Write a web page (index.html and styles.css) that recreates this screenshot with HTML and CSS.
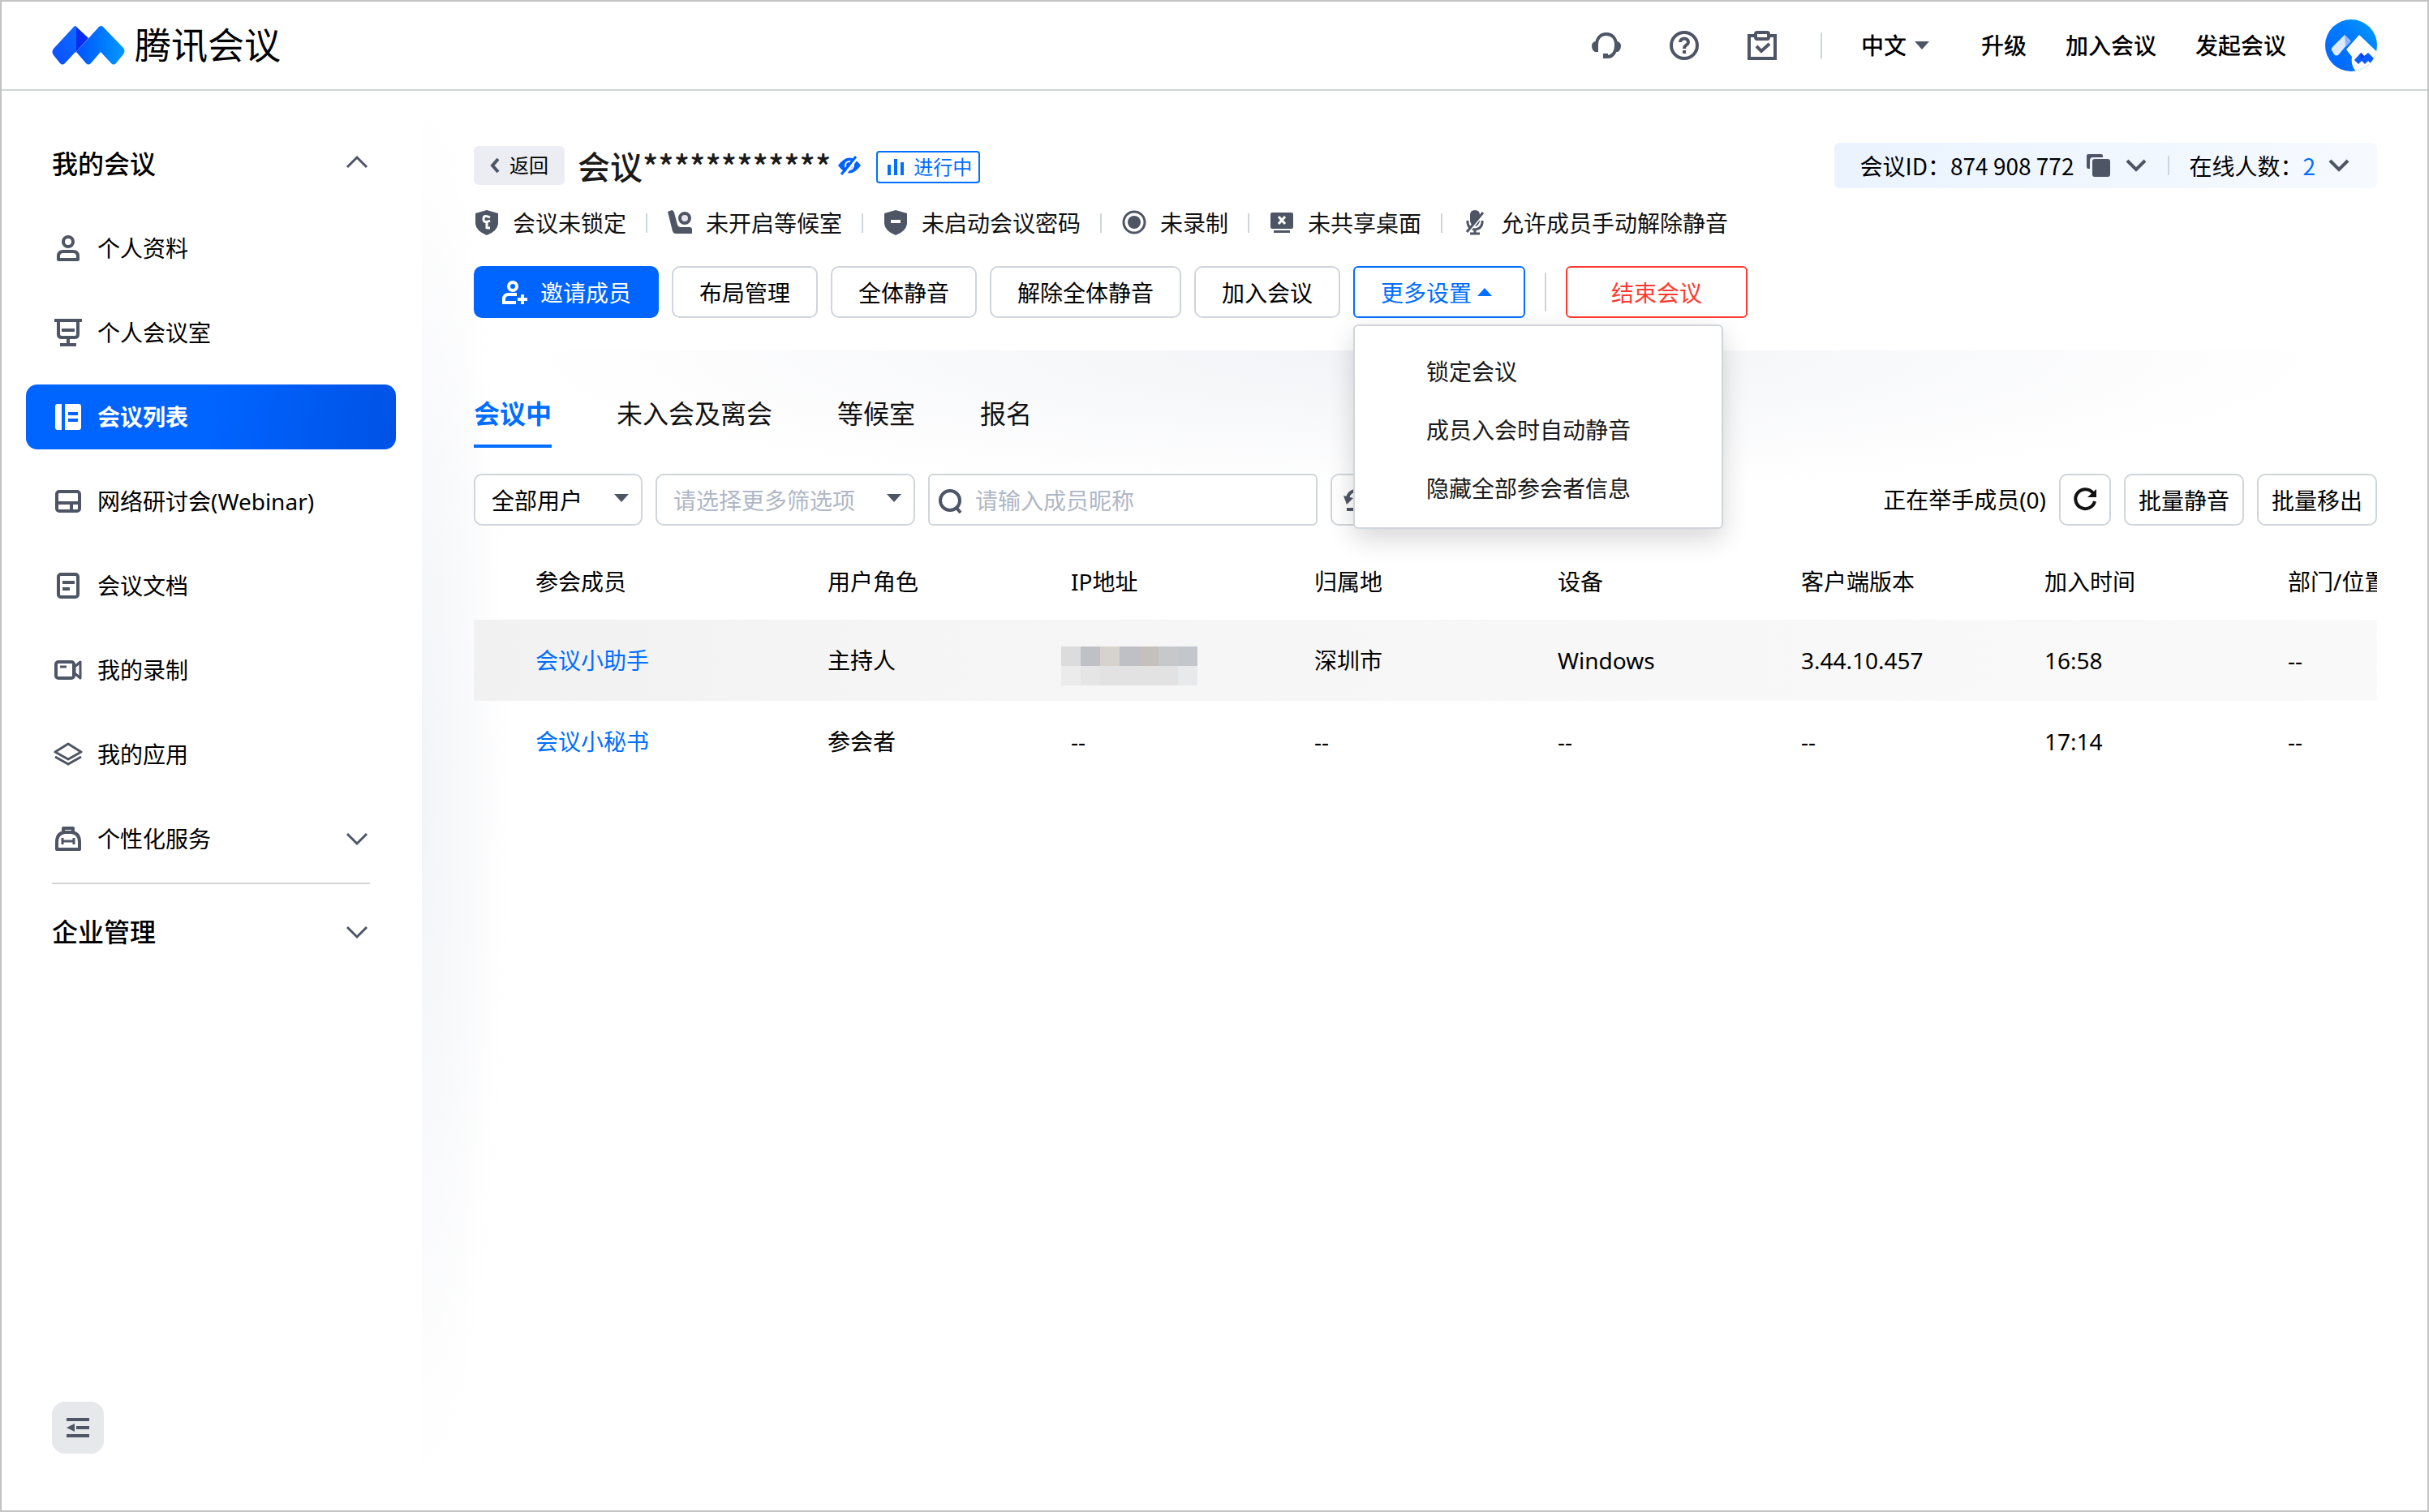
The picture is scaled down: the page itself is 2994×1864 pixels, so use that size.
FILE: index.html
```html
<!DOCTYPE html>
<html lang="zh-CN">
<head>
<meta charset="UTF-8">
<meta name="viewport" content="width=device-width, initial-scale=1.0">
<title>腾讯会议</title>
<link rel="stylesheet" href="styles.css">
</head>
<body>

<div class="page">
    <header class="header">
        <a href="#" class="logo">
            <svg width="90" height="48" viewBox="0 0 90 48">
                <defs>
                    <linearGradient id="logo-left" x1="0" y1="1" x2="1" y2="0">
                        <stop offset="0" stop-color="#0a4dff"/>
                        <stop offset="1" stop-color="#0d6bff"/>
                    </linearGradient>
                    <linearGradient id="logo-right" x1="0" y1="0" x2="1" y2="0">
                        <stop offset="0" stop-color="#0052ff"/>
                        <stop offset="1" stop-color="#0099ff"/>
                    </linearGradient>
                </defs>
                <path d="M29 0 45 15 29 33Z" fill="#0a2cf0"/>
                <path d="M27 1Q29 -1 30 1V31L16 46Q13 49 10 46L2 36Q-1 32 2 28Z" fill="url(#logo-left)"/>
                <path d="M58 1Q60.500 -1 63 1L88 27Q91 31 88 35L79 46Q76 49 73 46L60 32 48 46Q45 49 42 46L30 32Z" fill="url(#logo-right)"/>
            </svg>
            <span>腾讯会议</span>
        </a>
        <div class="header-right">
            <button class="icon-button" aria-label="客服">
                <svg width="36" height="36" viewBox="0 0 36 36" fill="none" stroke="#4e5565" stroke-width="4">
                    <path d="M6 17C6 9 11 4 18 4S30 9 30 17C30 27 25 32 20 32H14"/>
                    <path d="M0 18Q0 15 4 13H8V26H4Q0 24 0 18ZM36 18Q36 15 32 13H29V26H32Q36 24 36 18ZM14 28H20V34H14Z" fill="#4e5565" stroke="none"/>
                </svg>
            </button>
            <button class="icon-button" aria-label="帮助">
                <svg width="36" height="36" viewBox="0 0 36 36" fill="none" stroke="#4e5565" stroke-width="4">
                    <circle cx="18" cy="18" r="16"/>
                    <path d="M13 14C13 8 23 8 23 14 23 18 18 17 18 22"/>
                    <path d="M18 24V28"/>
                </svg>
            </button>
            <button class="icon-button" aria-label="待办">
                <svg width="36" height="36" viewBox="0 0 36 36" fill="none" stroke="#4e5565" stroke-width="4">
                    <path d="M9 6H2V34H34V6H27"/>
                    <rect x="10" y="2" width="16" height="8" rx="2"/>
                    <path d="M11 19 17 25 27 16"/>
                </svg>
            </button>
            <span class="header-line"></span>
            <button class="lang">中文
                <svg width="18" height="10" viewBox="0 0 18 10"><path d="M0 0H18L9 10Z" fill="#4e5565"/></svg>
            </button>
            <nav class="header-nav">
                <a href="#">升级</a>
                <a href="#">加入会议</a>
                <a href="#">发起会议</a>
            </nav>
            <a href="#" class="avatar" aria-label="个人中心">
                <svg width="64" height="64" viewBox="0 0 64 64">
                    <defs>
                        <linearGradient id="avatar-bg" x1="0" y1="1" x2="1" y2="0">
                            <stop offset="0" stop-color="#0062ff"/>
                            <stop offset="0.6" stop-color="#007dff"/>
                            <stop offset="1" stop-color="#00a0ff"/>
                        </linearGradient>
                        <clipPath id="avatar-clip"><circle cx="32" cy="32" r="32"/></clipPath>
                    </defs>
                    <g clip-path="url(#avatar-clip)">
                        <rect width="64" height="64" fill="url(#avatar-bg)"/>
                        <path d="M24 19 31 26 17 43Q14 46 11 43L8 38Q7 36 9 34Z" fill="#dfeaff"/>
                        <path d="M24 19 32 27 25 34Z" fill="#8eb6ff"/>
                        <path d="M42 19 66 42V66H40Q31 58 33 46L26 37Z" fill="#fff"/>
                        <path d="M36 50 44 41 48 45 53 41 62 50 57 55 53 51 49 55 45 51 41 55Z" fill="#0a5cff"/>
                        <path d="M44 41 48 45 44 49Z" fill="#0a2cf0"/>
                    </g>
                </svg>
            </a>
        </div>
    </header>

    <div class="body">
        <aside class="sidebar">
            <button class="side-title">我的会议
                <svg width="28" height="24" viewBox="0 0 28 24" fill="none" stroke="#4e5565" stroke-width="3"><path d="M2 16 14 4 26 16"/></svg>
            </button>
            <nav class="side-nav">
                <a href="#" class="side-item">
                    <svg width="36" height="36" viewBox="0 0 36 36" fill="none" stroke="#4e5565" stroke-width="4">
                        <circle cx="18" cy="10" r="6"/>
                        <path d="M12 22H24Q30 22 30 28V32H6V28Q6 22 12 22Z" stroke-linejoin="round"/>
                    </svg>
                    <span>个人资料</span>
                </a>
                <a href="#" class="side-item">
                    <svg width="36" height="36" viewBox="0 0 36 36" fill="none" stroke="#4e5565" stroke-width="4">
                        <path d="M1 3H35M6 3V20Q6 24 10 24H26Q30 24 30 20V3M18 24V33M8 33H28M10 15H26"/>
                    </svg>
                    <span>个人会议室</span>
                </a>
                <a href="#" class="side-item active">
                    <svg width="36" height="36" viewBox="0 0 36 36">
                        <path d="M5 2H10V34H5Q2 34 2 31V5Q2 2 5 2ZM14 2H31Q34 2 34 5V31Q34 34 31 34H14Z" fill="#fff"/>
                        <path d="M18 14H30M18 22H30" stroke="#0062ff" stroke-width="4"/>
                    </svg>
                    <span>会议列表</span>
                </a>
                <a href="#" class="side-item">
                    <svg width="36" height="36" viewBox="0 0 36 36" fill="none" stroke="#4e5565" stroke-width="4">
                        <rect x="4" y="6" width="28" height="24" rx="3"/>
                        <path d="M4 20H32M22 20V30"/>
                    </svg>
                    <span>网络研讨会(Webinar)</span>
                </a>
                <a href="#" class="side-item">
                    <svg width="36" height="36" viewBox="0 0 36 36" fill="none" stroke="#4e5565" stroke-width="4">
                        <rect x="6" y="4" width="24" height="28" rx="3"/>
                        <path d="M11 14H26M11 22H20"/>
                    </svg>
                    <span>会议文档</span>
                </a>
                <a href="#" class="side-item">
                    <svg width="36" height="36" viewBox="0 0 36 36" fill="none" stroke="#4e5565" stroke-width="4">
                        <rect x="3" y="8" width="22" height="20" rx="3"/>
                        <path d="M8 14H16" stroke-width="3"/>
                        <path d="M26 14 33 8V28L26 22Z" stroke-width="3" stroke-linejoin="round"/>
                    </svg>
                    <span>我的录制</span>
                </a>
                <a href="#" class="side-item">
                    <svg width="36" height="36" viewBox="0 0 36 36" fill="none" stroke="#4e5565" stroke-width="3">
                        <path d="M18 5 34 15 18 24 2 15Z" stroke-linejoin="round"/>
                        <path d="M2 21 18 30 34 21"/>
                    </svg>
                    <span>我的应用</span>
                </a>
                <a href="#" class="side-item">
                    <svg width="36" height="36" viewBox="0 0 36 36" fill="none" stroke="#4e5565" stroke-width="4">
                        <path d="M4 31V22Q4 11 14 10H22Q32 11 32 22V31Z" stroke-linejoin="round"/>
                        <path d="M12 10V5H24V10" stroke-linejoin="round"/>
                        <path d="M10 21H26M11 17V25M25 17V25" stroke-width="3"/>
                    </svg>
                    <span>个性化服务</span>
                    <svg class="side-arrow" width="28" height="18" viewBox="0 0 28 18" fill="none" stroke="#4e5565" stroke-width="3"><path d="M2 3 14 15 26 3"/></svg>
                </a>
            </nav>
            <hr class="side-line">
            <button class="side-title">企业管理
                <svg width="28" height="18" viewBox="0 0 28 18" fill="none" stroke="#4e5565" stroke-width="3"><path d="M2 3 14 15 26 3"/></svg>
            </button>
            <button class="collapse" aria-label="收起菜单">
                <svg width="28" height="24" viewBox="0 0 28 24" fill="#4e5565">
                    <path d="M0 0H28V4H0ZM12 10H28V14H12ZM0 20H28V24H0ZM0 12 10 7V17Z"/>
                </svg>
            </button>
        </aside>

        <main class="main">
            <section class="meeting">
                <div class="title-row">
                    <button class="back">
                        <svg width="12" height="20" viewBox="0 0 12 20" fill="none" stroke="#4e5565" stroke-width="4"><path d="M10 2 3 10 10 18"/></svg>
                        返回
                    </button>
                    <h1>会议************</h1>
                    <button class="eye" aria-label="显示会议名称">
                        <svg width="30" height="24" viewBox="0 0 30 24">
                            <path d="M1 12Q15 -7 29 12 15 31 1 12Z" fill="#0062ff"/>
                            <circle cx="15" cy="12" r="5" fill="none" stroke="#fff" stroke-width="2"/>
                            <path d="M8 25 26 1" stroke="#fff" stroke-width="3"/>
                            <path d="M5 23 23 1" stroke="#0062ff" stroke-width="3"/>
                        </svg>
                    </button>
                    <span class="badge">
                        <svg width="20" height="20" viewBox="0 0 20 20"><path d="M0 7H4V20H0ZM8 0H12V20H8ZM16 4H20V20H16Z" fill="#006fff"/></svg>
                        进行中
                    </span>
                    <div class="info">
                        <span>会议ID：874 908 772</span>
                        <button class="icon-button copy" aria-label="复制会议ID">
                            <svg width="30" height="28" viewBox="0 0 30 28" fill="#4e5565">
                                <path d="M0 2Q0 0 2 0H18Q20 0 20 2V4H8Q4 4 4 8V18H2Q0 18 0 16Z"/>
                                <rect x="7" y="6" width="22" height="22" rx="3"/>
                            </svg>
                        </button>
                        <button class="icon-button" aria-label="展开会议信息">
                            <svg width="26" height="16" viewBox="0 0 26 16" fill="none" stroke="#4e5565" stroke-width="4"><path d="M2 2 13 13 24 2"/></svg>
                        </button>
                        <span class="info-line"></span>
                        <span>在线人数：</span>
                        <span class="count">2</span>
                        <button class="icon-button" aria-label="展开在线人数">
                            <svg width="26" height="16" viewBox="0 0 26 16" fill="none" stroke="#4e5565" stroke-width="4"><path d="M2 2 13 13 24 2"/></svg>
                        </button>
                    </div>
                </div>

                <ul class="status">
                    <li>
                        <svg width="32" height="32" viewBox="0 0 32 32">
                            <path d="M16 0 30 4V17Q29 26 16 31 3 26 2 17V4Z" fill="#4e5565"/>
                            <path d="M20 9Q12 5 12 11T20 13M16 15V23M16 22H20" fill="none" stroke="#fff" stroke-width="3"/>
                        </svg>
                        会议未锁定
                    </li>
                    <li>
                        <svg width="32" height="32" viewBox="0 0 32 32">
                            <path d="M1 2 6 0Q8 0 9 3L13 18Q14 21 17 21H28Q31 21 31 24V29H11Q8 29 7 26Z" fill="#4e5565"/>
                            <circle cx="22" cy="10" r="6" fill="#e4e6ea" stroke="#4e5565" stroke-width="4"/>
                        </svg>
                        未开启等候室
                    </li>
                    <li>
                        <svg width="32" height="32" viewBox="0 0 32 32">
                            <path d="M16 0 30 4V17Q29 26 16 31 3 26 2 17V4Z" fill="#4e5565"/>
                            <path d="M10 14H22" stroke="#fff" stroke-width="4"/>
                        </svg>
                        未启动会议密码
                    </li>
                    <li>
                        <svg width="32" height="32" viewBox="0 0 32 32">
                            <circle cx="16" cy="15" r="13" fill="none" stroke="#4e5565" stroke-width="3"/>
                            <circle cx="16" cy="15" r="8" fill="#4e5565"/>
                        </svg>
                        未录制
                    </li>
                    <li>
                        <svg width="32" height="32" viewBox="0 0 32 32">
                            <path d="M4 3H28Q30 3 30 5V21Q30 23 28 23H4Q2 23 2 21V5Q2 3 4 3ZM6 25H26V28H6Z" fill="#4e5565"/>
                            <path d="M12 8 20 17M20 8 12 17" stroke="#fff" stroke-width="3"/>
                        </svg>
                        未共享桌面
                    </li>
                    <li>
                        <svg width="32" height="32" viewBox="0 0 32 32" fill="none" stroke="#4e5565" stroke-width="3">
                            <path d="M16 0Q22 0 22 6V14Q20 20 16 20T10 14V6Q10 0 16 0Z" fill="#4e5565" stroke="none"/>
                            <path d="M7 13V16Q8 23 16 24 24 23 25 16V13M16 24V30M10 29H22"/>
                            <path d="M28 3 8 27" stroke="#fff"/>
                            <path d="M26 3 6 27"/>
                        </svg>
                        允许成员手动解除静音
                    </li>
                </ul>

                <div class="actions">
                    <button class="btn primary">
                        <svg width="32" height="32" viewBox="0 0 32 32" fill="none" stroke="#fff" stroke-width="4">
                            <circle cx="14" cy="8" r="5"/>
                            <path d="M19 18H9Q3 18 3 24V28H18M20 24H32M26 18V30"/>
                        </svg>
                        邀请成员
                    </button>
                    <button class="btn">布局管理</button>
                    <button class="btn">全体静音</button>
                    <button class="btn">解除全体静音</button>
                    <button class="btn">加入会议</button>
                    <div class="more">
                        <button class="btn open" aria-expanded="true">更多设置<svg width="32" height="16" viewBox="0 0 32 16"><path d="M7 12 16 2 25 12Z" fill="#006fff"/></svg></button>
                        <div class="menu">
                            <button>锁定会议</button>
                            <button>成员入会时自动静音</button>
                            <button>隐藏全部参会者信息</button>
                        </div>
                    </div>
                    <span class="action-line"></span>
                    <button class="btn danger">结束会议</button>
                </div>
            </section>

            <section class="members">
                <nav class="tabs">
                    <a href="#" class="active">会议中</a>
                    <a href="#">未入会及离会</a>
                    <a href="#">等候室</a>
                    <a href="#">报名</a>
                </nav>

                <div class="filters">
                    <div class="select user-select">
                        <select aria-label="用户范围"><option>全部用户</option></select>
                        <svg width="18" height="10" viewBox="0 0 18 10"><path d="M0 0H18L9 10Z" fill="#4e5565"/></svg>
                    </div>
                    <div class="select more-select">
                        <select class="empty" aria-label="更多筛选"><option>请选择更多筛选项</option></select>
                        <svg width="18" height="10" viewBox="0 0 18 10"><path d="M0 0H18L9 10Z" fill="#4e5565"/></svg>
                    </div>
                    <label class="search">
                        <svg width="32" height="32" viewBox="0 0 32 32" fill="none" stroke="#4e5565" stroke-width="4">
                            <circle cx="15" cy="16" r="12"/>
                            <path d="M22 24 28 31"/>
                        </svg>
                        <input type="text" placeholder="请输入成员昵称" aria-label="成员昵称">
                    </label>
                    <button class="btn square" aria-label="重置">
                        <svg width="32" height="32" viewBox="0 0 32 32" fill="none" stroke="#4e5565" stroke-width="4">
                            <path d="M5 14C7 1 27 2 27 14 27 19 24 21 22 22M4 28H28"/>
                            <path d="M0 11 12 14 4 22Z" fill="#4e5565" stroke="none"/>
                        </svg>
                    </button>
                    <span class="hands">正在举手成员(0)</span>
                    <button class="btn square" aria-label="刷新">
                        <svg width="32" height="32" viewBox="0 0 32 32" fill="none" stroke="#111" stroke-width="4">
                            <path d="M26 8A12 12 0 1 0 28 18"/>
                            <path d="M30 3V13H19Z" fill="#111" stroke="none"/>
                        </svg>
                    </button>
                    <button class="btn small">批量静音</button>
                    <button class="btn small">批量移出</button>
                </div>

                <div class="table-wrap">
                    <table>
                        <thead>
                            <tr>
                                <th class="name">参会成员</th>
                                <th>用户角色</th>
                                <th>IP地址</th>
                                <th>归属地</th>
                                <th>设备</th>
                                <th>客户端版本</th>
                                <th>加入时间</th>
                                <th>部门/位置</th>
                            </tr>
                        </thead>
                        <tbody>
                            <tr class="hover">
                                <td class="name"><a href="#">会议小助手</a></td>
                                <td>主持人</td>
                                <td>
                                    <svg class="mosaic" width="168" height="48" viewBox="0 0 168 48" shape-rendering="crispEdges">
                                        <path d="M0 0H24V24H0Z" fill="#dcdcdc"/>
                                        <path d="M24 0H48V24H24Z" fill="#bfc1c6"/>
                                        <path d="M48 0H72V24H48Z" fill="#d6d2ce"/>
                                        <path d="M72 0H96V24H72Z" fill="#bfc0c5"/>
                                        <path d="M96 0H120V24H96Z" fill="#c5c0bc"/>
                                        <path d="M120 0H144V24H120Z" fill="#c6c8ca"/>
                                        <path d="M144 0H168V24H144Z" fill="#c3c7cb"/>
                                        <path d="M0 24H24V48H0Z" fill="#ebebeb"/>
                                        <path d="M24 24H48V48H24Z" fill="#e5e5e5"/>
                                        <path d="M48 24H144V48H48Z" fill="#e2e2e2"/>
                                        <path d="M144 24H168V48H144Z" fill="#e8e9eb"/>
                                    </svg>
                                </td>
                                <td>深圳市</td>
                                <td>Windows</td>
                                <td>3.44.10.457</td>
                                <td>16:58</td>
                                <td>--</td>
                            </tr>
                            <tr>
                                <td class="name"><a href="#">会议小秘书</a></td>
                                <td>参会者</td>
                                <td>--</td>
                                <td>--</td>
                                <td>--</td>
                                <td>--</td>
                                <td>17:14</td>
                                <td>--</td>
                            </tr>
                        </tbody>
                    </table>
                </div>
            </section>
        </main>
    </div>
</div>

</body>
</html>
```

FILE: styles.css
```css
* {
    box-sizing: border-box;
}

body {
    margin: 0;
    font-family: "Noto Sans", "Noto Sans CJK SC", sans-serif;
    font-size: 28px;
    line-height: 40px;
    color: #000;
    background-color: #fff;
}

a {
    color: inherit;
    text-decoration: none;
}

button, input, select {
    font: inherit;
    color: inherit;
    border: none;
    background: none;
    padding: 0;
    margin: 0;
}

button {
    cursor: pointer;
    white-space: nowrap;
}

svg {
    display: block;
    flex-shrink: 0;
}

.page {
    display: flex;
    flex-direction: column;
    min-height: 100vh;
    border: 2px solid #c2c2c2;
}

/* header */
.header {
    display: flex;
    justify-content: space-between;
    align-items: center;
    height: 110px;
    padding: 0 62px;
    border-bottom: 2px solid #d0d5db;
}

.logo {
    display: flex;
    align-items: center;
    gap: 12px;
    font-size: 45px;
    line-height: 56px;
}

.header-right {
    display: flex;
    align-items: center;
    font-weight: 500;
}

.icon-button {
    display: flex;
    align-items: center;
}

.header-right .icon-button {
    margin-right: 60px;
}

.header-right .icon-button:nth-child(3) {
    margin-right: 54px;
}

.header-line {
    width: 2px;
    height: 32px;
    background-color: #d0d5db;
}

.lang {
    display: flex;
    align-items: center;
    gap: 10px;
    margin-left: 48px;
    font-weight: 500;
}

.header-nav {
    display: flex;
    gap: 48px;
    margin: 0 48px 0 64px;
}

.body {
    display: flex;
    flex: 1;
}

/* sidebar */
.sidebar {
    display: flex;
    flex-direction: column;
    flex-shrink: 0;
    width: 518px;
    padding: 66px 32px 70px 30px;
}

.side-title {
    display: flex;
    justify-content: space-between;
    align-items: center;
    padding: 0 34px 0 32px;
    font-size: 32px;
    font-weight: 500;
    line-height: 48px;
}

.side-nav {
    display: flex;
    flex-direction: column;
    gap: 24px;
    margin-top: 40px;
}

.side-item {
    display: flex;
    align-items: center;
    gap: 18px;
    height: 80px;
    padding: 0 34px;
    border-radius: 14px;
}

.side-item.active {
    color: #fff;
    font-weight: 700;
    background: linear-gradient(100deg, #0064ff 50%, #0052e5);
}

.side-arrow {
    margin-left: auto;
}

.side-line {
    width: calc(100% - 64px);
    height: 2px;
    margin: 14px 32px 35px;
    border: none;
    background-color: #d4d4d4;
}

.collapse {
    display: flex;
    justify-content: center;
    align-items: center;
    width: 64px;
    height: 64px;
    margin: auto 0 0 32px;
    border-radius: 16px;
    background-color: #e6e8ec;
}

/* main */
.main {
    flex: 1;
    min-width: 0;
    padding-top: 64px;
    background: radial-gradient(ellipse 110px 860px at 0 860px, #f3f4f8, rgba(243, 244, 248, 0));
}

.meeting {
    padding: 0 62px 40px 64px;
}

.title-row {
    display: flex;
    align-items: center;
    height: 56px;
}

.back {
    display: flex;
    justify-content: center;
    align-items: center;
    gap: 12px;
    width: 112px;
    height: 48px;
    border-radius: 6px;
    font-size: 24px;
    background-color: #ebedf2;
}

h1 {
    margin: 0 8px 0 16px;
    font-family: "Noto Sans CJK SC", sans-serif;
    font-size: 40px;
    font-weight: 500;
    line-height: 56px;
    color: #1a1a1a;
}

.badge {
    display: flex;
    align-items: center;
    gap: 12px;
    height: 40px;
    margin: 4px 0 0 18px;
    padding: 0 8px 0 12px;
    border: 2px solid #006fff;
    border-radius: 4px;
    font-size: 24px;
    line-height: 36px;
    color: #006fff;
}

.info {
    display: flex;
    align-items: center;
    height: 56px;
    margin-left: auto;
    padding: 0 34px 0 32px;
    border-radius: 6px;
    font-family: "Noto Sans CJK SC", sans-serif;
    background: linear-gradient(90deg, #eaf3ff, #f6faff);
}

.copy {
    margin: 0 18px 0 16px;
}

.info-line {
    width: 2px;
    height: 24px;
    margin: 0 24px 0 26px;
    background-color: #d0d5db;
}

.count {
    margin-right: 16px;
    color: #006fff;
}

.status {
    display: flex;
    align-items: center;
    margin: 23px 0 33px;
    padding: 0;
    list-style: none;
    color: #111;
}

.status li {
    display: flex;
    align-items: center;
    gap: 16px;
}

.status li + li::before {
    content: "";
    width: 2px;
    height: 24px;
    margin: 0 8px 0 24px;
    background-color: #d0d5db;
}

.actions {
    display: flex;
    align-items: center;
    gap: 16px;
}

.btn {
    display: flex;
    justify-content: center;
    align-items: center;
    height: 64px;
    padding: 2px 32px 0;
    border: 2px solid #d0d5db;
    border-radius: 10px;
    background-color: #fff;
}

.btn.primary {
    gap: 16px;
    border-color: #0064ff;
    color: #fff;
    background-color: #0064ff;
}

.btn.open {
    border-color: #006fff;
    border-radius: 6px;
    color: #006fff;
}

.btn.danger {
    width: 224px;
    border-color: #ff3b30;
    border-radius: 6px;
    color: #ff3b30;
}

.btn.square {
    width: 64px;
    padding: 0;
}

.btn.small {
    padding: 2px 16px 0;
}

.action-line {
    width: 2px;
    height: 48px;
    margin: 0 8px;
    background-color: #d0d5db;
}

.more {
    position: relative;
}

.menu {
    position: absolute;
    top: 72px;
    left: 0;
    z-index: 10;
    width: 456px;
    padding: 20px 0 12px;
    border: 2px solid #d0d5db;
    border-radius: 6px;
    background-color: #fff;
    box-shadow: 0 12px 32px rgba(0, 0, 0, 0.16);
}

.menu button {
    display: block;
    width: 100%;
    height: 72px;
    padding: 0 88px;
    text-align: left;
    color: #1a1a1a;
}

/* members */
.members {
    padding: 54px 62px 0 64px;
    background: radial-gradient(ellipse 1120px 180px at 50% 0, #f2f3f7, rgba(242, 243, 247, 0));
}

.tabs {
    display: flex;
    gap: 80px;
    font-size: 32px;
    line-height: 48px;
    color: #111;
}

.tabs a {
    padding-bottom: 14px;
    border-bottom: 4px solid transparent;
}

.tabs .active {
    border-color: #006fff;
    font-weight: 700;
    color: #006fff;
}

.filters {
    display: flex;
    align-items: center;
    gap: 16px;
    margin: 32px 0 20px;
}

.select {
    position: relative;
}

.select select {
    width: 100%;
    height: 64px;
    padding: 2px 60px 0 20px;
    border: 2px solid #d0d5db;
    border-radius: 10px;
    background-color: #fff;
    appearance: none;
}

.select .empty {
    color: #b0b7c6;
}

.select svg {
    position: absolute;
    top: 25px;
    right: 17px;
    pointer-events: none;
}

.user-select {
    width: 208px;
}

.more-select {
    width: 320px;
}

.search {
    display: flex;
    align-items: center;
    gap: 14px;
    width: 480px;
    height: 64px;
    padding: 2px 10px 0;
    border: 2px solid #d0d5db;
    border-radius: 6px;
    background-color: #fff;
}

.search input {
    flex: 1;
    min-width: 0;
    height: 56px;
    outline: none;
}

.search input::placeholder {
    color: #b0b7c6;
}

.hands {
    margin-left: auto;
}

.table-wrap {
    overflow: hidden;
}

table {
    width: 2536px;
    table-layout: fixed;
    border-collapse: collapse;
}

th, td {
    width: 300px;
    padding: 0;
    text-align: left;
    font-weight: 400;
}

th {
    height: 96px;
    padding-top: 2px;
}

td {
    height: 100px;
}

.name {
    width: 436px;
    padding-left: 76px;
}

.name a {
    color: #006fff;
}

.hover {
    background: linear-gradient(90deg, #f1f1f2, #f5f5f5 20%, #fafafa);
}

.mosaic {
    margin: 14px 0 0 -12px;
}
```
